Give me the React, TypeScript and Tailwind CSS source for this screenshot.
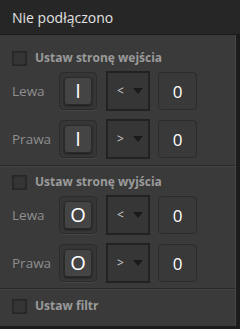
import React from "react";

const font = { fontFamily: '"Open Sans", "Noto Sans", sans-serif' };

function Check({ label }: { label: string }) {
  return (
    <div className="flex items-center h-[14px] gap-2">
      <div className="w-[15px] h-[15px] bg-[#353535] border border-[#262626] shadow-[inset_0_0_2px_rgba(0,0,0,0.6)]" />
      <span className="text-[12px] font-bold text-[#9b9b9b] leading-none">{label}</span>
    </div>
  );
}

function Row({ label, sym, cmp }: { label: string; sym: string; cmp: string }) {
  return (
    <div className="flex items-center h-[38px]">
      <span className="w-[47px] text-[13.5px] text-[#8e8e8e]">{label}</span>
      <div className="w-[38px] h-[38px] rounded-[4px] border border-[#2b2b2b] bg-[#363636] flex items-center justify-center shadow-[0_1px_0_rgba(255,255,255,0.05)]">
        <div className="w-[28px] h-[28px] rounded-[3px] bg-[#444444] border border-[#2a2a2a] shadow-[0_1px_2px_rgba(0,0,0,0.5)] flex items-center justify-center text-white text-[20px] leading-none">
          {sym}
        </div>
      </div>
      <div className="ml-[9px] w-[44px] h-[40px] border-2 border-[#222222] bg-[#363636] flex items-center pl-[9px] gap-[9px]">
        <span className="text-[#d0d0d0] text-[12px] leading-none">{cmp}</span>
        <svg width="10" height="6" viewBox="0 0 10 6"><path d="M0 0 H10 L5 6 Z" fill="#1a1a1a" /></svg>
      </div>
      <div className="ml-[8px] w-[39px] h-[38px] rounded-[4px] border border-[#2b2b2b] bg-[#393939] flex items-center justify-center text-white text-[17px] leading-none">
        0
      </div>
    </div>
  );
}

export default function App() {
  return (
    <div style={font} className="w-[240px] h-[329px] bg-[#1c1c1c] flex flex-col">
      <div className="h-[35px] bg-[#262626] border-b border-[#1a1a1a] flex items-center px-3 text-[14px] text-[#e2e2e2] shrink-0">
        Nie podłączono
      </div>
      <div className="flex-1 mr-[4px] mb-[3px] bg-[#3a3a3a] border-r border-[#474747] flex flex-col">
        <div className="px-3 pt-[16px] pb-[7px] flex flex-col gap-[7px]">
          <Check label="Ustaw stronę wejścia" />
          <div className="flex flex-col gap-[10px]">
            <Row label="Lewa" sym="I" cmp="<" />
            <Row label="Prawa" sym="I" cmp=">" />
          </div>
        </div>
        <div className="h-[2px] border-t border-[#282828] border-b border-b-[#444444]" />
        <div className="px-3 pt-[8px] pb-[6px] flex flex-col gap-[7px]">
          <Check label="Ustaw stronę wyjścia" />
          <div className="flex flex-col gap-[10px]">
            <Row label="Lewa" sym="O" cmp="<" />
            <Row label="Prawa" sym="O" cmp=">" />
          </div>
        </div>
        <div className="h-[2px] border-t border-[#282828] border-b border-b-[#444444]" />
        <div className="px-3 pt-[9px]">
          <Check label="Ustaw filtr" />
        </div>
      </div>
    </div>
  );
}
